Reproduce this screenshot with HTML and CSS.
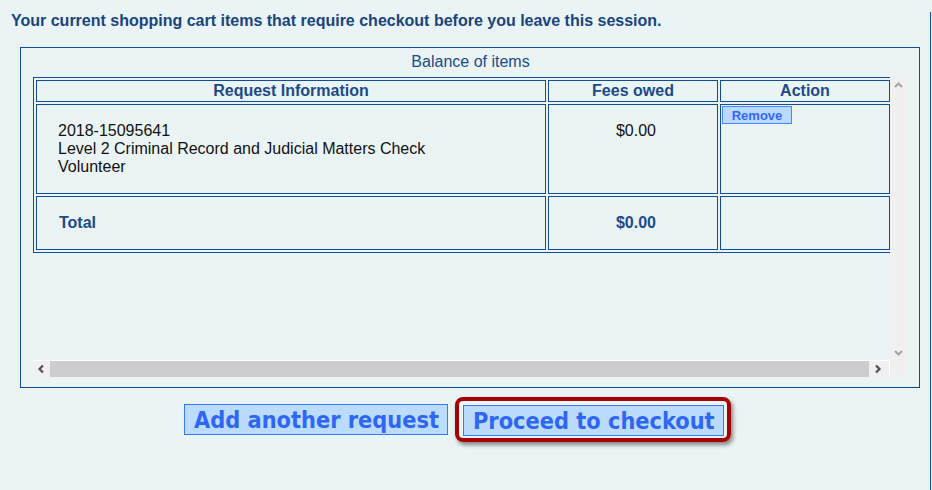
FILE: index.html
```html
<!DOCTYPE html>
<html lang="en">
<head>
    <meta charset="UTF-8">
    <meta name="viewport" content="width=device-width, initial-scale=1.0">
    <title>Shopping cart</title>
    <link rel="stylesheet" href="styles.css">
</head>
<body>
    <div class="page">
        <p class="intro">Your current shopping cart items that require checkout before you leave this session.</p>

        <div class="balance">
            <div class="balance-title">Balance of items</div>
            <div class="scroller">
                <div class="viewport">
                    <table class="cart">
                        <tr class="head-row">
                            <th class="col-info">Request Information</th>
                            <th class="col-fees">Fees owed</th>
                            <th class="col-action">Action</th>
                        </tr>
                        <tr class="item-row">
                            <td class="info">2018-15095641<br>Level 2 Criminal Record and Judicial Matters Check<br>Volunteer</td>
                            <td class="fee">$0.00</td>
                            <td class="action"><button class="remove-btn">Remove</button></td>
                        </tr>
                        <tr class="total-row">
                            <td class="total-label">Total</td>
                            <td class="total-fee">$0.00</td>
                            <td></td>
                        </tr>
                    </table>
                </div>
                <div class="vbar">
                    <svg class="arrow" width="17" height="17" viewBox="0 0 17 17"><polyline points="5,10 8.5,6.5 12,10" fill="none" stroke="#a3a3a3" stroke-width="2"/></svg>
                    <svg class="arrow" width="17" height="17" viewBox="0 0 17 17"><polyline points="5,7 8.5,10.5 12,7" fill="none" stroke="#a3a3a3" stroke-width="2"/></svg>
                </div>
                <div class="hbar">
                    <svg class="arrow" width="17" height="16" viewBox="0 0 17 16"><polyline points="10,4.5 6.5,8 10,11.5" fill="none" stroke="#505050" stroke-width="2.2"/></svg>
                    <div class="thumb"></div>
                    <svg class="arrow" width="17" height="16" viewBox="0 0 17 16"><polyline points="7,4.5 10.5,8 7,11.5" fill="none" stroke="#505050" stroke-width="2.2"/></svg>
                </div>
            </div>
        </div>

        <div class="actions">
            <button class="big-btn">Add another request</button>
            <span class="highlight"><button class="big-btn">Proceed to checkout</button></span>
        </div>
    </div>
</body>
</html>
```

FILE: styles.css
```css
/* page */
body {
    margin: 0;
    background-color: #EBF4F5;
    font-family: "Liberation Sans", Arial, sans-serif;
}

.page {
    width: 931px;
    height: 490px;
    border-right: 1px solid #114C9A;
    box-sizing: border-box;
}

.intro {
    margin: 12px 0 0 11px;
    line-height: 18px;
    font-size: 16px;
    font-weight: bold;
    color: #18457F;
}

/* balance box */
.balance {
    margin: 17px 0 0 20px;
    width: 900px;
    height: 341px;
    border: 1px solid #114C9A;
    box-sizing: border-box;
    padding: 4px 11px 0 12px;
}

.balance-title {
    text-align: center;
    font-size: 16px;
    line-height: 20px;
    color: #1B4A8A;
    margin-bottom: 5px;
}

.scroller {
    display: grid;
    grid-template-columns: 857px 17px;
    grid-template-rows: 283px 17px;
}

.viewport {
    overflow: hidden;
}

/* table */
.cart {
    border-collapse: separate;
    border-spacing: 2px;
    border: 1px solid #114C9A;
    table-layout: fixed;
    width: 860px;
}

.cart th, .cart td {
    border: 1px solid #114C9A;
    box-sizing: border-box;
    padding: 0;
    font-size: 16px;
}

.cart th {
    height: 22px;
    font-weight: bold;
    color: #1B4A8A;
    text-align: center;
    line-height: 18px;
}

.col-info { width: 510px; }
.col-fees { width: 170px; }
.col-action { width: 170px; }

.item-row td {
    height: 90px;
    vertical-align: top;
    color: #111;
    line-height: 18px;
}

.info {
    padding: 17px 0 0 21px !important;
}

.fee {
    text-align: center;
    padding: 17px 0 0 6px !important;
}

.action {
    padding: 1px !important;
}

.remove-btn {
    display: block;
    width: 70px;
    height: 18px;
    padding: 0;
    font-family: "Liberation Sans", Arial, sans-serif;
    font-size: 13px;
    font-weight: bold;
    color: #3366FF;
    background-color: #BBDAFF;
    border: 1px solid #4A84FF;
}

.total-row td {
    height: 54px;
    font-weight: bold;
    color: #1B4A8A;
}

.total-label {
    padding-left: 22px !important;
}

.total-fee {
    text-align: center;
    padding-left: 6px !important;
}

/* fake scrollbars */
.vbar {
    grid-row: 1 / 3;
    grid-column: 2;
    background-color: #F0F0F0;
    display: flex;
    flex-direction: column;
    justify-content: space-between;
    padding-bottom: 16px;
}

.hbar {
    display: flex;
    background-color: #F0F0F0;
    border-top: 1px solid #fff;
    border-right: 1px solid #fff;
}

.thumb {
    width: 819px;
    background-color: #CDCDCD;
}

.arrow {
    display: block;
}

/* buttons */
.actions {
    display: flex;
    align-items: center;
    gap: 7px;
    margin-top: 9px;
    padding-left: 184px;
}

.big-btn {
    height: 31px;
    padding: 0 8px 0 9px;
    font-family: "DejaVu Sans Condensed", Tahoma, sans-serif;
    font-size: 23.3px;
    font-weight: bold;
    color: #2F66F5;
    background-color: #BBDCFF;
    border: 1px solid #3C78FF;
    line-height: 28px;
}

.highlight {
    display: block;
    padding: 4px 3px 2px 4px;
    border: 4px solid #A60000;
    border-radius: 8px;
    box-shadow: 2px 3px 4px rgba(0, 0, 0, 0.45);
}

.highlight .big-btn {
    display: block;
}
```
